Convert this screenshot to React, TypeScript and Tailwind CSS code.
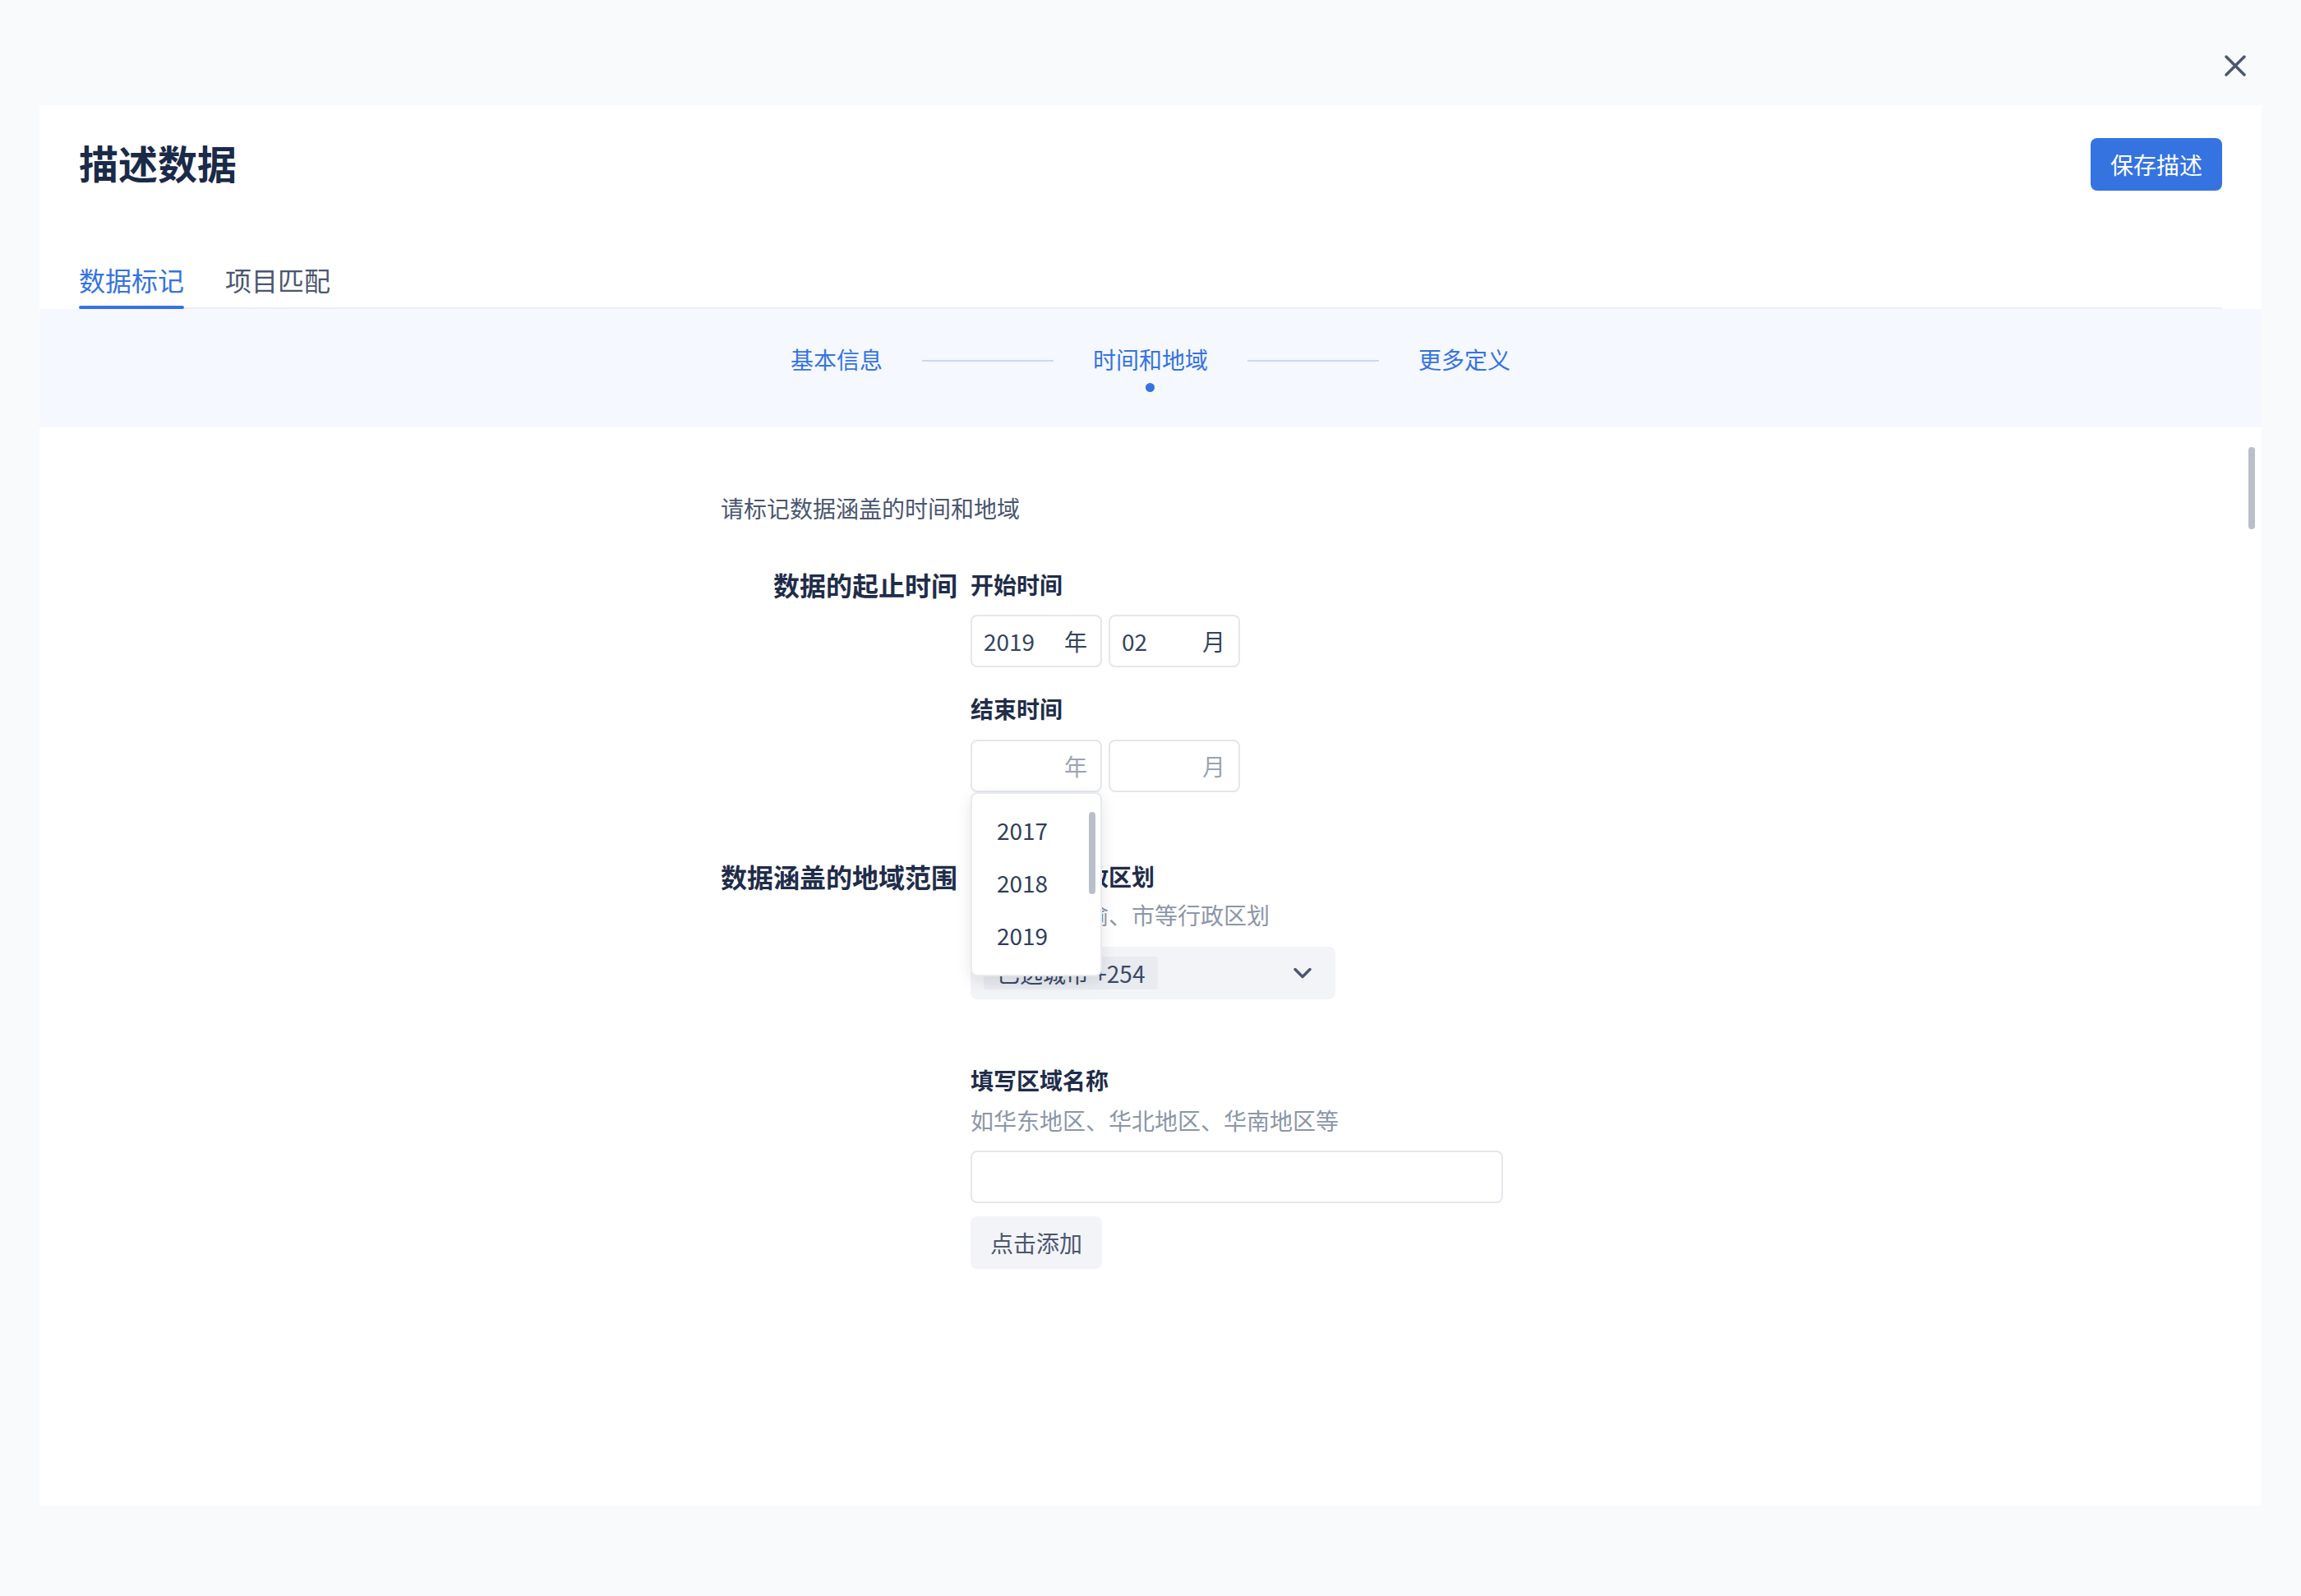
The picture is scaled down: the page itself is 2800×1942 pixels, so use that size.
import React from 'react'

const years = ['2017', '2018', '2019']

function CloseIcon() {
  return (
    <svg width="28" height="28" viewBox="0 0 28 28" fill="none">
      <path d="M3 3L25 25M25 3L3 25" stroke="#4b5670" strokeWidth="3.5" strokeLinecap="round" />
    </svg>
  )
}

function Chevron() {
  return (
    <svg width="24" height="14" viewBox="0 0 24 14" fill="none">
      <path d="M3 2.5L12 11.5L21 2.5" stroke="#4b5670" strokeWidth="3.5" strokeLinecap="round" strokeLinejoin="round" />
    </svg>
  )
}

function DateBox({ value, suffix }: { value?: string; suffix: string }) {
  return (
    <div className="w-[160px] h-[64px] border-2 border-[#e4e7ec] rounded-[8px] bg-white flex items-center justify-between pl-[14px] pr-[16px] text-[28px] leading-[40px]">
      <span className="text-[#34435f]">{value ?? ''}</span>
      <span className={value ? 'text-[#34435f]' : 'text-[#9aa3b2]'}>{suffix}</span>
    </div>
  )
}

function YearDropdown() {
  return (
    <div className="absolute left-0 top-full z-10 w-[160px] h-[224px] bg-white border-2 border-[#e8eaee] rounded-[8px] shadow-[0_6px_18px_rgba(15,23,42,0.10)] flex">
      <div className="flex-1 py-[14px]">
        {years.map(y => (
          <div key={y} className="h-[64px] leading-[60px] pb-[4px] pl-[30px] text-[28px] text-[#2f3d5a]">{y}</div>
        ))}
      </div>
      <div className="w-[8px] mr-[6px] pt-[22px]">
        <div className="h-[100px] rounded-full bg-[#b9bfc9]" />
      </div>
    </div>
  )
}

const label = 'w-[288px] text-right text-[32px] leading-[40px] pb-[4px] font-semibold text-[#1f2d4a]'
const subLabel = 'text-[28px] leading-[40px] pb-[4px] font-semibold text-[#1f2d4a]'
const hint = 'text-[28px] leading-[36px] pb-[4px] text-[#8c96a8]'

export default function App() {
  return (
    <div className="h-[1942px] bg-[#f9fafc] flex flex-col font-['Noto_Sans_CJK_SC','Noto_Sans',sans-serif]">
      <div className="h-[128px] flex justify-end items-start pt-[66px] pr-[66px]">
        <CloseIcon />
      </div>

      <div className="mx-[48px] h-[1704px] bg-white flex flex-col">
        {/* header */}
        <div className="px-[48px] pt-[40px]">
          <div className="h-[64px] flex items-center justify-between">
            <h1 className="text-[48px] leading-[58px] pb-[6px] font-semibold text-[#1b2a49]">描述数据</h1>
            <button className="w-[160px] h-[64px] rounded-[8px] bg-[#3573e0] text-white text-[28px] leading-[40px]">保存描述</button>
          </div>
          <div className="mt-[88px] flex gap-[48px] border-b-2 border-[#eceef2]">
            <div className="flex flex-col -mb-[2px]">
              <span className="text-[32px] leading-[40px] text-[#3573e0] pb-[12px]">数据标记</span>
              <div className="h-[4px] rounded-full bg-[#3573e0]" />
            </div>
            <div className="flex flex-col -mb-[2px] pl-[2px]">
              <span className="text-[32px] leading-[40px] text-[#4b5670] pb-[12px]">项目匹配</span>
              <div className="h-[4px]" />
            </div>
          </div>
        </div>

        {/* stepper */}
        <div className="h-[144px] bg-[#f5f8ff] flex justify-center items-start pt-[43px] gap-[48px] text-[28px] text-[#3573e0]">
          <span className="leading-[36px] pb-[4px]">基本信息</span>
          <div className="h-[40px] flex items-center"><div className="w-[160px] h-[2px] bg-[#c6d9fb]" /></div>
          <div className="flex flex-col items-center">
            <span className="leading-[36px] pb-[4px]">时间和地域</span>
            <div className="mt-[7px] w-[11px] h-[11px] rounded-full bg-[#3573e0]" />
          </div>
          <div className="h-[40px] flex items-center"><div className="w-[160px] h-[2px] bg-[#c6d9fb]" /></div>
          <span className="leading-[36px] pb-[4px]">更多定义</span>
        </div>

        {/* scroll body */}
        <div className="flex-1 flex">
          <div className="flex-1 pl-[829px] pt-[80px]">
            <p className="text-[28px] leading-[36px] pb-[4px] text-[#4a5670]">请标记数据涵盖的时间和地域</p>

            <div className="mt-[51px] flex gap-[16px]">
              <div className={label}>数据的起止时间</div>
              <div className="flex flex-col">
                <div className={subLabel}>开始时间</div>
                <div className="mt-[13px] flex gap-[8px]">
                  <DateBox value="2019" suffix="年" />
                  <DateBox value="02" suffix="月" />
                </div>
                <div className={`mt-[30px] ${subLabel}`}>结束时间</div>
                <div className="mt-[14px] flex gap-[8px]">
                  <div className="relative">
                    <DateBox suffix="年" />
                    <YearDropdown />
                  </div>
                  <DateBox suffix="月" />
                </div>
              </div>
            </div>

            <div className="mt-[82px] flex gap-[16px]">
              <div className={label}>数据涵盖的地域范围</div>
              <div className="flex flex-col">
                <div className={subLabel}>选择所在行政区划</div>
                <div className={`mt-[5px] ${hint}`}>如京、沪、渝、市等行政区划</div>
                <div className="mt-[17px] w-[444px] h-[64px] rounded-[8px] bg-[#f3f4f7] flex items-center justify-between pl-[16px] pr-[28px]">
                  <span className="h-[40px] px-[16px] rounded-[4px] bg-[#e8ebf0] text-[28px] leading-[40px] text-[#3a4a66]">已选城市 +254</span>
                  <Chevron />
                </div>

                <div className={`mt-[78px] ${subLabel}`}>填写区域名称</div>
                <div className={`mt-[7px] ${hint}`}>如华东地区、华北地区、华南地区等</div>
                <div className="mt-[15px] w-[648px] h-[64px] rounded-[8px] border-2 border-[#e4e7ec] bg-white" />
                <button className="mt-[16px] w-[160px] h-[64px] rounded-[8px] bg-[#f3f4f7] text-[28px] leading-[40px] text-[#4b5670]">点击添加</button>
              </div>
            </div>
          </div>
          <div className="w-[8px] mr-[8px] pt-[24px]">
            <div className="h-[100px] rounded-full bg-[#b9bfc9]" />
          </div>
        </div>
      </div>
    </div>
  )
}
